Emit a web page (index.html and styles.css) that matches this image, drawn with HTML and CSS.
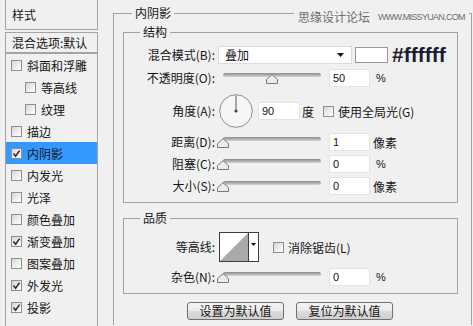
FILE: index.html
```html
<!DOCTYPE html>
<html lang="zh">
<head>
<meta charset="utf-8">
<title>内阴影</title>
<link rel="stylesheet" href="styles.css">
</head>
<body>
<div class="app">
  <aside class="side">
    <div class="side-head">样式</div>
    <div class="side-blend">混合选项:默认</div>
    <ul class="side-list">
      <li class="item"><span class="cb"></span>斜面和浮雕</li>
      <li class="item sub"><span class="cb"></span>等高线</li>
      <li class="item sub"><span class="cb"></span>纹理</li>
      <li class="item"><span class="cb"></span>描边</li>
      <li class="item active"><span class="cb"><svg class="tick" viewBox="0 0 9 9" width="9" height="9"><path d="M1.5 4.6 L3.6 7.2 L7.6 1.6" fill="none" stroke="#2b2b33" stroke-width="1.6"/></svg></span>内阴影</li>
      <li class="item"><span class="cb"></span>内发光</li>
      <li class="item"><span class="cb"></span>光泽</li>
      <li class="item"><span class="cb"></span>颜色叠加</li>
      <li class="item"><span class="cb"><svg class="tick" viewBox="0 0 9 9" width="9" height="9"><path d="M1.5 4.6 L3.6 7.2 L7.6 1.6" fill="none" stroke="#2b2b33" stroke-width="1.6"/></svg></span>渐变叠加</li>
      <li class="item"><span class="cb"></span>图案叠加</li>
      <li class="item"><span class="cb"><svg class="tick" viewBox="0 0 9 9" width="9" height="9"><path d="M1.5 4.6 L3.6 7.2 L7.6 1.6" fill="none" stroke="#2b2b33" stroke-width="1.6"/></svg></span>外发光</li>
      <li class="item"><span class="cb"><svg class="tick" viewBox="0 0 9 9" width="9" height="9"><path d="M1.5 4.6 L3.6 7.2 L7.6 1.6" fill="none" stroke="#2b2b33" stroke-width="1.6"/></svg></span>投影</li>
    </ul>
  </aside>

  <main class="panel">
    <fieldset class="group outer">
      <legend>内阴影</legend>

      <fieldset class="group inner structure">
        <legend>结构</legend>

        <div class="row row-blend">
          <span class="lbl">混合模式(B):</span>
          <div class="select">
            <span class="select-text">叠加</span>
            <svg class="select-arrow" viewBox="0 0 7 4" width="7" height="4"><polygon points="0,0 7,0 3.5,4" fill="#111"/></svg>
          </div>
          <span class="swatch"></span>
          <span class="hex">#ffffff</span>
        </div>

        <div class="row row-opacity">
          <span class="lbl">不透明度(O):</span>
          <div class="slider">
            <span class="track"></span>
            <svg class="thumb" style="left:49px" viewBox="0 0 12 10" width="12" height="10"><polygon points="0.5,9.5 0.5,5.5 6,0.7 11.5,5.5 11.5,9.5" fill="#ececec" stroke="#7a7a7a"/></svg>
          </div>
          <span class="num">50</span>
          <span class="unit pct">%</span>
        </div>

        <div class="row row-angle">
          <span class="lbl">角度(A):</span>
          <svg class="dial" viewBox="0 0 34 34" width="34" height="34">
            <circle cx="17" cy="17" r="16.3" fill="#f6f6f6" stroke="#8e8e8e"/>
            <line x1="17" y1="17" x2="17" y2="1.5" stroke="#5a5a5a" stroke-width="1"/>
            <circle cx="17" cy="17" r="1.6" fill="#444"/>
          </svg>
          <span class="num num-angle">90</span>
          <span class="unit deg">度</span>
          <span class="cb cb-form"></span>
          <span class="cb-label">使用全局光(G)</span>
        </div>

        <div class="row row-dist">
          <span class="lbl">距离(D):</span>
          <div class="slider">
            <span class="track"></span>
            <svg class="thumb" style="left:0px" viewBox="0 0 12 10" width="12" height="10"><polygon points="0.5,9.5 0.5,5.5 6,0.7 11.5,5.5 11.5,9.5" fill="#ececec" stroke="#7a7a7a"/></svg>
          </div>
          <span class="num">1</span>
          <span class="unit px">像素</span>
        </div>

        <div class="row row-tight">
          <span class="lbl">阻塞(C):</span>
          <div class="slider">
            <span class="track"></span>
            <svg class="thumb" style="left:0px" viewBox="0 0 12 10" width="12" height="10"><polygon points="0.5,9.5 0.5,5.5 6,0.7 11.5,5.5 11.5,9.5" fill="#ececec" stroke="#7a7a7a"/></svg>
          </div>
          <span class="num">0</span>
          <span class="unit pct">%</span>
        </div>

        <div class="row row-tight">
          <span class="lbl">大小(S):</span>
          <div class="slider">
            <span class="track"></span>
            <svg class="thumb" style="left:0px" viewBox="0 0 12 10" width="12" height="10"><polygon points="0.5,9.5 0.5,5.5 6,0.7 11.5,5.5 11.5,9.5" fill="#ececec" stroke="#7a7a7a"/></svg>
          </div>
          <span class="num">0</span>
          <span class="unit px">像素</span>
        </div>
      </fieldset>

      <fieldset class="group inner quality">
        <legend>品质</legend>

        <div class="row row-contour">
          <span class="lbl">等高线:</span>
          <div class="contour">
            <svg class="curve" viewBox="0 0 28 28" width="28" height="28"><polygon points="0,28 28,0 28,28" fill="#a9a9a9"/></svg>
            <div class="contour-drop">
              <svg viewBox="0 0 5 3" width="5" height="3"><polygon points="0,0 5,0 2.5,3" fill="#111"/></svg>
            </div>
          </div>
          <span class="cb cb-form cb-aa"></span>
          <span class="cb-label">消除锯齿(L)</span>
        </div>

        <div class="row row-noise">
          <span class="lbl">杂色(N):</span>
          <div class="slider">
            <span class="track"></span>
            <svg class="thumb" style="left:0px" viewBox="0 0 12 10" width="12" height="10"><polygon points="0.5,9.5 0.5,5.5 6,0.7 11.5,5.5 11.5,9.5" fill="#ececec" stroke="#7a7a7a"/></svg>
          </div>
          <span class="num">0</span>
          <span class="unit pct">%</span>
        </div>
      </fieldset>

      <div class="buttons">
        <button class="btn" type="button">设置为默认值</button>
        <button class="btn" type="button">复位为默认值</button>
      </div>
    </fieldset>
  </main>

  <div class="watermark"><span class="wm-cn">思缘设计论坛</span><span class="wm-en">WWW.MISSYUAN.COM</span></div>
</div>
</body>
</html>
```

FILE: styles.css
```css
html, body {
  margin: 0;
  padding: 0;
  height: 326px;
  overflow: hidden;
}

body {
  background: #f0f0f0;
  font-family: "Noto Sans CJK SC", "Noto Sans", sans-serif;
  font-size: 12px;
  color: #161616;
}

.app {
  position: relative;
  display: flex;
  align-items: flex-start;
}

/* ---------- sidebar ---------- */
.side {
  flex: none;
  width: 93px;
  margin-left: 5px;
}

.side-head {
  box-sizing: border-box;
  height: 30px;
  border: 1px solid #a4a4a4;
  border-top: none;
  padding-left: 6px;
  line-height: 29px;
}

.side-blend {
  box-sizing: border-box;
  height: 21px;
  margin-top: 2px;
  border: 1px solid #a4a4a4;
  padding-left: 6px;
  line-height: 19px;
}

.side-list {
  box-sizing: border-box;
  list-style: none;
  margin: 0;
  padding: 0;
  height: 273px;
  border: 1px solid #a4a4a4;
  border-bottom: none;
}

.item {
  display: flex;
  align-items: center;
  gap: 5px;
  height: 22px;
  padding-left: 5px;
}

.item.sub {
  padding-left: 19px;
}

.item.active {
  background: #3399ff;
}

.cb {
  flex: none;
  box-sizing: border-box;
  width: 11px;
  height: 11px;
  border: 1px solid #8e8f8f;
  background: linear-gradient(135deg, #d6d6d6 0%, #f4f4f4 70%, #ffffff 100%);
  display: flex;
  align-items: center;
  justify-content: center;
}

.tick {
  display: block;
}

/* ---------- main panel ---------- */
.panel {
  flex: none;
  margin-left: 15px;
}

.group {
  margin: 0;
  padding: 0;
  border: 1px solid #a2a2a2;
  min-width: 0;
}

.group > legend {
  padding: 0 3px;
  font-size: 12px;
  line-height: 16px;
}

.outer {
  box-sizing: border-box;
  width: 359px;
  margin-top: 5px;
  padding-bottom: 5px;
  border-bottom: none;
}

.outer > legend {
  margin-left: 18px;
}

.inner {
  box-sizing: border-box;
  width: 335px;
  margin: 3px 0 0 9px;
}

.inner > legend {
  margin-left: 16px;
}

.structure {
  padding-bottom: 6px;
}

.quality {
  margin-top: 7px;
  padding-bottom: 6px;
}

.row {
  display: flex;
  align-items: center;
  height: 20px;
}

.lbl {
  flex: none;
  width: 91px;
  text-align: right;
  line-height: 16px;
  white-space: nowrap;
}

.row-blend { margin-top: 5px; }
.row-opacity { margin-top: 3px; }
.row-angle { margin-top: 6px; height: 34px; }
.row-dist { margin-top: 4px; }
.row-tight { margin-top: 2px; }
.row-contour { margin-top: 6px; height: 30px; }
.row-noise { margin-top: 5px; }

/* select */
.select {
  flex: none;
  box-sizing: border-box;
  width: 134px;
  height: 18px;
  margin-left: 3px;
  background: #ffffff;
  border: 1px solid #dcdcdc;
  display: flex;
  align-items: center;
  justify-content: space-between;
}

.select-text {
  padding-left: 6px;
  line-height: 16px;
}

.select-arrow {
  margin-right: 7px;
}

.swatch {
  flex: none;
  box-sizing: border-box;
  width: 33px;
  height: 16px;
  margin-left: 3px;
  background: #ffffff;
  border: 1px solid #9a9a9a;
}

.hex {
  margin-left: 4px;
  font-family: "Liberation Sans", Arial, sans-serif;
  font-weight: bold;
  font-size: 21px;
  line-height: 20px;
  color: #1c1c2e;
}

/* slider */
.slider {
  flex: none;
  position: relative;
  width: 106px;
  height: 20px;
  margin-left: 2px;
}

.track {
  display: block;
  width: 98px;
  height: 4px;
  margin: 5px 0 0 6px;
  border-radius: 2px;
  background: linear-gradient(#8a8a8a, #d4d4d4);
}

.thumb {
  position: absolute;
  top: 6px;
}

/* numeric fields */
.num {
  flex: none;
  box-sizing: border-box;
  width: 41px;
  height: 18px;
  margin-left: 6px;
  padding-left: 3px;
  background: #ffffff;
  border: 1px solid #e4e4e4;
  font-family: "Liberation Sans", Arial, sans-serif;
  font-size: 11px;
  line-height: 16px;
  color: #111;
}

.num-angle {
  width: 42px;
  margin-left: 5px;
}

.unit.pct {
  margin-left: 6px;
  font-family: "Liberation Sans", Arial, sans-serif;
  font-size: 11px;
}

.unit.px {
  margin-left: 3px;
}

.unit.deg {
  margin-left: 2px;
}

.dial {
  flex: none;
  margin-left: 4px;
}

.cb-form {
  margin-left: 9px;
}

.cb-label {
  margin-left: 4px;
  white-space: nowrap;
}

/* contour picker */
.contour {
  flex: none;
  box-sizing: border-box;
  width: 40px;
  height: 30px;
  margin-left: 4px;
  border: 1px solid #3c3c3c;
  background: #ffffff;
  display: flex;
}

.curve {
  display: block;
  flex: none;
}

.contour-drop {
  flex: 1;
  border-left: 1px solid #3c3c3c;
  display: flex;
  justify-content: center;
  align-items: flex-start;
  padding-top: 10px;
}

.contour-drop svg {
  display: block;
}

.cb-aa {
  margin-left: 14px;
}

/* buttons */
.buttons {
  display: flex;
  gap: 12px;
  margin: 8px 0 0 73px;
}

.btn {
  box-sizing: border-box;
  width: 97px;
  height: 18px;
  padding: 0;
  border: 1px solid #707070;
  border-radius: 3px;
  background: linear-gradient(#f4f4f4 0%, #ebebeb 50%, #dcdcdc 51%, #cfcfcf 100%);
  font-family: "Noto Sans CJK SC", sans-serif;
  font-size: 12px;
  line-height: 16px;
  color: #161616;
  text-align: center;
}

/* watermark over the group frame */
.watermark {
  position: absolute;
  top: 9px;
  left: 294px;
  padding: 0 4px;
  background: #f0f0f0;
  display: flex;
  align-items: center;
  height: 16px;
  color: #6e6e6e;
}

.wm-cn {
  font-size: 12px;
  line-height: 16px;
}

.wm-en {
  margin-left: 8px;
  font-family: "Liberation Sans", Arial, sans-serif;
  font-size: 9px;
  letter-spacing: -0.7px;
}
```
